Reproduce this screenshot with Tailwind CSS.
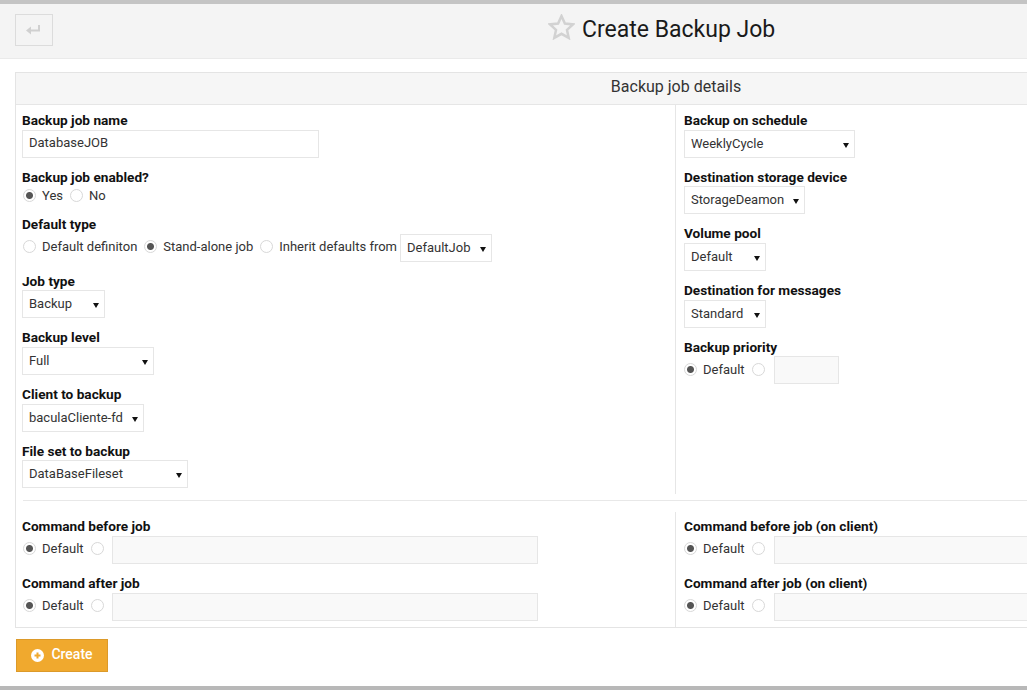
<!doctype html>
<html lang="en">
<head>
<meta charset="utf-8">
<title>Create Backup Job</title>
<script src="https://cdn.jsdelivr.net/npm/@tailwindcss/browser@4"></script>
</head>
<body class="bg-white">
<div class="h-[690px] w-[1027px] overflow-hidden font-['Roboto',sans-serif] text-[13px] text-[#333] border-t-4 border-b-4 border-t-[#c4c4c4] border-b-[#b8b8b8] flex flex-col">
  <header class="flex shrink-0 h-[55px] items-start bg-[#f4f4f4] border-b border-[#eaeaea] pl-[15px] pt-[10px]">
    <button class="w-[38px] h-[32px] flex items-center justify-center pr-[2px] border border-[#dcdcdc] bg-[#f4f4f4]">
      <svg width="14" height="10" viewBox="0 0 14 10"><path d="M13 0v5.500H4" fill="none" stroke="#d0d0d0" stroke-width="2"/><path d="M0 5.500 5 1.500v8z" fill="#d0d0d0"/></svg>
    </button>
    <div class="flex items-center ml-[495px] gap-[7px] h-[30px]">
      <svg class="mb-[4px]" width="27" height="26" viewBox="0 0 27 26" fill="none" stroke="#d2d2d2" stroke-width="2.500"><path d="M13.500 2l3.400 7.500 8.100.9-6 5.500 1.700 8-7.200-4.100-7.200 4.100 1.700-8-6-5.500 8.100-.9z"/></svg>
      <h1 class="text-[23px] leading-[30px] mt-[2px] text-[#1a1a1a] whitespace-nowrap">Create Backup Job</h1>
    </div>
  </header>

  <main class="pl-[15px] pt-[13px] w-[1337px] shrink-0">
    <section class="border border-[#e4e4e4]">
      <h2 class="h-[32px] leading-[28px] bg-[#f6f6f6] border-b border-[#e6e6e6] text-center text-[16px] text-[#333]">Backup job details</h2>

      <div class="grid grid-cols-[659px_1fr]">
        <div class="pl-[6px] pt-[5px] h-[389px]">
          <div class="mb-[9px]">
            <label class="block font-bold text-[13.650px] pt-[1px] leading-[18.670px] text-[#111]">Backup job name</label>
            <input class="block w-[297px] h-[28px] border border-[#e6e6e6] px-[6px] pb-[2px] text-[13px] outline-none" value="DatabaseJOB">
          </div>
          <div class="mb-[9px]">
            <label class="block font-bold text-[13.650px] pt-[1px] leading-[18.670px] text-[#111]">Backup job enabled?</label>
            <div class="flex items-center h-[18.670px]">
              <input type="radio" name="en" checked class="appearance-none w-[13px] h-[13px] rounded-full border border-[#d8d8d8] checked:bg-[radial-gradient(circle,#555_0_3px,#fff_4px)] ml-[1px]">
              <span class="ml-[6px]">Yes</span>
              <input type="radio" name="en" class="appearance-none w-[13px] h-[13px] rounded-full border border-[#d8d8d8] ml-[7px]">
              <span class="ml-[6px]">No</span>
            </div>
          </div>
          <div class="mb-[9px]">
            <label class="block font-bold text-[13.650px] pt-[1px] leading-[18.670px] text-[#111]">Default type</label>
            <div class="flex items-center h-[28px]">
              <input type="radio" name="dt" class="appearance-none mb-[2px] w-[13px] h-[13px] rounded-full border border-[#d8d8d8] ml-[1px]">
              <span class="ml-[6px] mb-[2px]">Default definiton</span>
              <input type="radio" name="dt" checked class="appearance-none mb-[2px] w-[13px] h-[13px] rounded-full border border-[#d8d8d8] checked:bg-[radial-gradient(circle,#555_0_3px,#fff_4px)] ml-[7px]">
              <span class="ml-[6px] mb-[2px]">Stand-alone job</span>
              <input type="radio" name="dt" class="appearance-none mb-[2px] w-[13px] h-[13px] rounded-full border border-[#d8d8d8] ml-[7px]">
              <span class="ml-[6px] mb-[2px]">Inherit defaults from</span>
              <div class="relative ml-[3px] w-[92px] h-[28px]">
                <select class="appearance-none w-full h-full border border-[#e6e6e6] bg-white px-[6px] pb-[0.500px] text-[13px]"><option>DefaultJob</option></select>
                <svg class="absolute right-[6px] top-[13px]" width="6" height="5" viewBox="0 0 6 5"><path d="M0 0h6L3 5z" fill="#111"/></svg>
              </div>
            </div>
          </div>
          <div class="mb-[9px]">
            <label class="block font-bold text-[13.650px] pt-[1px] leading-[18.670px] text-[#111]">Job type</label>
            <div class="relative w-[83px] h-[28px]">
              <select class="appearance-none block w-full h-full border border-[#e6e6e6] bg-white px-[6px] pb-[0.500px] text-[13px]"><option>Backup</option></select>
              <svg class="absolute right-[6px] top-[13px]" width="6" height="5" viewBox="0 0 6 5"><path d="M0 0h6L3 5z" fill="#111"/></svg>
            </div>
          </div>
          <div class="mb-[9px]">
            <label class="block font-bold text-[13.650px] pt-[1px] leading-[18.670px] text-[#111]">Backup level</label>
            <div class="relative w-[132px] h-[28px]">
              <select class="appearance-none block w-full h-full border border-[#e6e6e6] bg-white px-[6px] pb-[0.500px] text-[13px]"><option>Full</option></select>
              <svg class="absolute right-[6px] top-[13px]" width="6" height="5" viewBox="0 0 6 5"><path d="M0 0h6L3 5z" fill="#111"/></svg>
            </div>
          </div>
          <div class="mb-[9px]">
            <label class="block font-bold text-[13.650px] pt-[1px] leading-[18.670px] text-[#111]">Client to backup</label>
            <div class="relative w-[122px] h-[28px]">
              <select class="appearance-none block w-full h-full border border-[#e6e6e6] bg-white px-[6px] pb-[0.500px] text-[13px]"><option>baculaCliente-fd</option></select>
              <svg class="absolute right-[6px] top-[13px]" width="6" height="5" viewBox="0 0 6 5"><path d="M0 0h6L3 5z" fill="#111"/></svg>
            </div>
          </div>
          <div>
            <label class="block font-bold text-[13.650px] pt-[1px] leading-[18.670px] text-[#111]">File set to backup</label>
            <div class="relative w-[166px] h-[28px]">
              <select class="appearance-none block w-full h-full border border-[#e6e6e6] bg-white px-[6px] pb-[0.500px] text-[13px]"><option>DataBaseFileset</option></select>
              <svg class="absolute right-[6px] top-[13px]" width="6" height="5" viewBox="0 0 6 5"><path d="M0 0h6L3 5z" fill="#111"/></svg>
            </div>
          </div>
        </div>

        <div class="border-l border-[#e6e6e6] pl-[8px] pt-[5px] h-[389px]">
          <div class="mb-[9px]">
            <label class="block font-bold text-[13.650px] pt-[1px] leading-[18.670px] text-[#111]">Backup on schedule</label>
            <div class="relative w-[171px] h-[28px]">
              <select class="appearance-none block w-full h-full border border-[#e6e6e6] bg-white px-[6px] pb-[0.500px] text-[13px]"><option>WeeklyCycle</option></select>
              <svg class="absolute right-[6px] top-[13px]" width="6" height="5" viewBox="0 0 6 5"><path d="M0 0h6L3 5z" fill="#111"/></svg>
            </div>
          </div>
          <div class="mb-[9px]">
            <label class="block font-bold text-[13.650px] pt-[1px] leading-[18.670px] text-[#111]">Destination storage device</label>
            <div class="relative w-[121px] h-[28px]">
              <select class="appearance-none block w-full h-full border border-[#e6e6e6] bg-white px-[6px] pb-[0.500px] text-[13px]"><option>StorageDeamon</option></select>
              <svg class="absolute right-[6px] top-[13px]" width="6" height="5" viewBox="0 0 6 5"><path d="M0 0h6L3 5z" fill="#111"/></svg>
            </div>
          </div>
          <div class="mb-[9px]">
            <label class="block font-bold text-[13.650px] pt-[1px] leading-[18.670px] text-[#111]">Volume pool</label>
            <div class="relative w-[82px] h-[28px]">
              <select class="appearance-none block w-full h-full border border-[#e6e6e6] bg-white px-[6px] pb-[0.500px] text-[13px]"><option>Default</option></select>
              <svg class="absolute right-[6px] top-[13px]" width="6" height="5" viewBox="0 0 6 5"><path d="M0 0h6L3 5z" fill="#111"/></svg>
            </div>
          </div>
          <div class="mb-[9px]">
            <label class="block font-bold text-[13.650px] pt-[1px] leading-[18.670px] text-[#111]">Destination for messages</label>
            <div class="relative w-[82px] h-[28px]">
              <select class="appearance-none block w-full h-full border border-[#e6e6e6] bg-white px-[6px] pb-[0.500px] text-[13px]"><option>Standard</option></select>
              <svg class="absolute right-[6px] top-[13px]" width="6" height="5" viewBox="0 0 6 5"><path d="M0 0h6L3 5z" fill="#111"/></svg>
            </div>
          </div>
          <div>
            <label class="block font-bold text-[13.650px] pt-[1px] leading-[18.670px] text-[#111]">Backup priority</label>
            <div class="flex items-center">
              <input type="radio" name="bp" checked class="appearance-none mb-[2px] w-[13px] h-[13px] rounded-full border border-[#d8d8d8] checked:bg-[radial-gradient(circle,#555_0_3px,#fff_4px)]">
              <span class="ml-[6px] mb-[2px]">Default</span>
              <input type="radio" name="bp" class="appearance-none mb-[2px] w-[13px] h-[13px] rounded-full border border-[#d8d8d8] ml-[7px]">
              <input class="ml-[9px] w-[65px] h-[28px] border border-[#e6e6e6] bg-[#f9f9f9] px-[6px] outline-none">
            </div>
          </div>
        </div>
      </div>

      <hr class="border-t border-[#e8e8e8] ml-[7px] mt-[6px] mb-[11px]">

      <div class="grid grid-cols-[659px_1fr]">
        <div class="pl-[6px] pt-[4px] h-[115px]">
          <div class="mb-[9.330px]">
            <label class="block font-bold text-[13.650px] pt-[1px] leading-[18.670px] text-[#111]">Command before job</label>
            <div class="flex items-center">
              <input type="radio" name="c1" checked class="appearance-none mb-[2px] w-[13px] h-[13px] rounded-full border border-[#d8d8d8] checked:bg-[radial-gradient(circle,#555_0_3px,#fff_4px)] ml-[1px]">
              <span class="ml-[6px] mb-[2px]">Default</span>
              <input type="radio" name="c1" class="appearance-none mb-[2px] w-[13px] h-[13px] rounded-full border border-[#d8d8d8] ml-[7px]">
              <input class="ml-[8px] w-[426px] h-[28px] border border-[#e6e6e6] bg-[#f9f9f9] px-[6px] outline-none">
            </div>
          </div>
          <div>
            <label class="block font-bold text-[13.650px] pt-[1px] leading-[18.670px] text-[#111]">Command after job</label>
            <div class="flex items-center">
              <input type="radio" name="c2" checked class="appearance-none mb-[2px] w-[13px] h-[13px] rounded-full border border-[#d8d8d8] checked:bg-[radial-gradient(circle,#555_0_3px,#fff_4px)] ml-[1px]">
              <span class="ml-[6px] mb-[2px]">Default</span>
              <input type="radio" name="c2" class="appearance-none mb-[2px] w-[13px] h-[13px] rounded-full border border-[#d8d8d8] ml-[7px]">
              <input class="ml-[8px] w-[426px] h-[28px] border border-[#e6e6e6] bg-[#f9f9f9] px-[6px] outline-none">
            </div>
          </div>
        </div>
        <div class="border-l border-[#e6e6e6] pl-[8px] pt-[4px] h-[115px]">
          <div class="mb-[9.330px]">
            <label class="block font-bold text-[13.650px] pt-[1px] leading-[18.670px] text-[#111]">Command before job (on client)</label>
            <div class="flex items-center">
              <input type="radio" name="c3" checked class="appearance-none mb-[2px] w-[13px] h-[13px] rounded-full border border-[#d8d8d8] checked:bg-[radial-gradient(circle,#555_0_3px,#fff_4px)]">
              <span class="ml-[6px] mb-[2px]">Default</span>
              <input type="radio" name="c3" class="appearance-none mb-[2px] w-[13px] h-[13px] rounded-full border border-[#d8d8d8] ml-[7px]">
              <input class="ml-[9px] w-[426px] h-[28px] border border-[#e6e6e6] bg-[#f9f9f9] px-[6px] outline-none">
            </div>
          </div>
          <div>
            <label class="block font-bold text-[13.650px] pt-[1px] leading-[18.670px] text-[#111]">Command after job (on client)</label>
            <div class="flex items-center">
              <input type="radio" name="c4" checked class="appearance-none mb-[2px] w-[13px] h-[13px] rounded-full border border-[#d8d8d8] checked:bg-[radial-gradient(circle,#555_0_3px,#fff_4px)]">
              <span class="ml-[6px] mb-[2px]">Default</span>
              <input type="radio" name="c4" class="appearance-none mb-[2px] w-[13px] h-[13px] rounded-full border border-[#d8d8d8] ml-[7px]">
              <input class="ml-[9px] w-[426px] h-[28px] border border-[#e6e6e6] bg-[#f9f9f9] px-[6px] outline-none">
            </div>
          </div>
        </div>
      </div>
    </section>

    <button class="mt-[11px] ml-[1px] w-[92px] h-[33px] flex items-center justify-center gap-[7px] bg-[#f0a92e] border border-[#dc9a2a] text-white font-medium text-[14px]">
      <svg class="mb-[1px]" width="13" height="13" viewBox="0 0 13 13"><circle cx="6.500" cy="6.500" r="6.500" fill="#fff"/><path d="M6.500 3.500v6M3.500 6.500h6" stroke="#f0a92e" stroke-width="2"/></svg>
      <span class="mb-[2px]">Create</span>
    </button>
  </main>
</div>
</body>
</html>
